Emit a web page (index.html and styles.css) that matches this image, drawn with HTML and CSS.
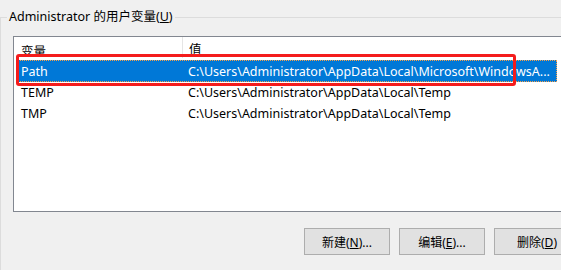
FILE: index.html
```html
<!DOCTYPE html>
<html>
<head>
  <link rel="stylesheet" href="styles.css">
</head>
<body>
  <div class="dialog">
    <fieldset class="group">
      <legend>Administrator 的用户变量(<u>U</u>)</legend>

      <div class="list">
        <div class="list-header">
          <div class="col col-name">变量</div>
          <div class="col col-value">值</div>
        </div>
        <div class="row selected">
          <div class="col col-name">Path</div>
          <div class="col col-value">C:\Users\Administrator\AppData\Local\Microsoft\WindowsA...</div>
        </div>
        <div class="row">
          <div class="col col-name">TEMP</div>
          <div class="col col-value">C:\Users\Administrator\AppData\Local\Temp</div>
        </div>
        <div class="row">
          <div class="col col-name">TMP</div>
          <div class="col col-value">C:\Users\Administrator\AppData\Local\Temp</div>
        </div>
        <!-- red annotation box -->
        <div class="mark"></div>
      </div>

      <div class="button-group">
        <button>新建(<u>N</u>)...</button>
        <button>编辑(<u>E</u>)...</button>
        <button>删除(<u>D</u>)</button>
      </div>
    </fieldset>
  </div>
</body>
</html>
```

FILE: styles.css
```css
body {
  margin: 0;
  background: #f0f0f0;
  font-family: "Noto Sans", "Noto Sans CJK SC", sans-serif;
  font-size: 12.5px;
  color: #000;
  overflow: hidden;
}

.dialog {
  width: 561px;
  height: 270px;
  overflow: hidden;
}

.group {
  margin: 8px 0 0 0;
  padding: 0 12px;
  width: 567px;
  height: 320px;
  border: 1px solid #dcdcdc;
}

.group legend {
  margin-left: -6px;
  padding: 0 2px;
  line-height: 18px;
}

.list {
  position: relative;
  margin-top: 10px;
  height: 174px;
  border: 1px solid #828790;
  background: #fff;
  padding-left: 2px;
}

.list-header {
  display: flex;
  height: 23px;
  align-items: center;
}

.list-header .col-name {
  border-right: 1px solid #e5e5e5;
  height: 17px;
  align-self: flex-start;
  padding-top: 4px;
}

.col {
  padding-left: 5px;
  white-space: nowrap;
}

.col-name {
  width: 161px;
}

.col-value {
  padding-left: 6px;
}

.row {
  display: flex;
  align-items: center;
  height: 21px;
  width: 541px;
}

.row.selected {
  height: 22px;
  background: #0078d7;
  color: #fff;
  outline: 1px dotted #f7a14a;
  outline-offset: -1px;
}

.mark {
  position: absolute;
  left: 2px;
  top: 17px;
  width: 494px;
  height: 26px;
  border: 3px solid #f41c1c;
  border-radius: 3px;
}

.button-group {
  display: flex;
  justify-content: flex-end;
  gap: 9px;
  margin-top: 16px;
}

button {
  width: 86px;
  height: 27px;
  padding: 0;
  background: #e1e1e1;
  border: 1px solid #adadad;
  font-family: inherit;
  font-size: 12px;
  color: #000;
}
```
